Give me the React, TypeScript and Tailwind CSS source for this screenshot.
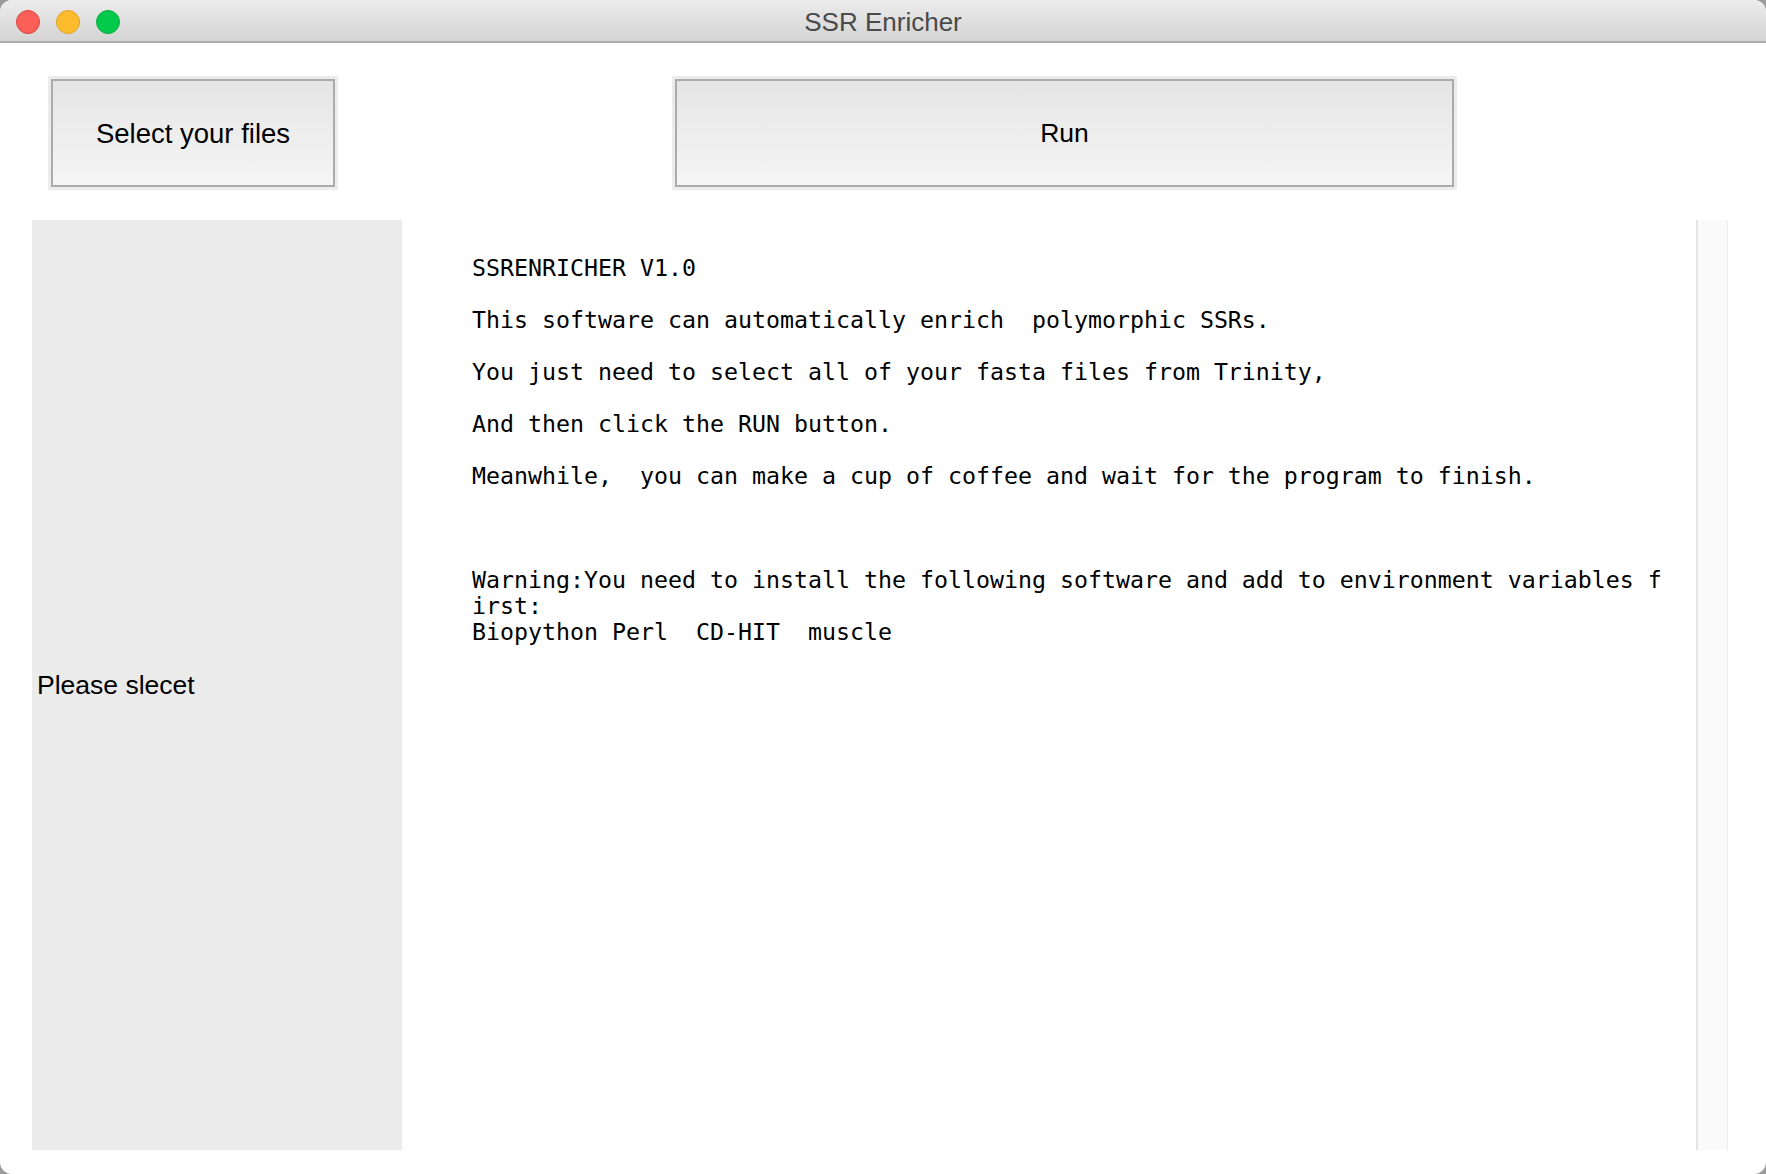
import React from 'react';

const mono = { fontFamily: '"DejaVu Sans Mono", "Liberation Mono", monospace' };
const sans = { fontFamily: '"Liberation Sans", Arial, sans-serif' };

const lines = [
  'SSRENRICHER V1.0',
  '',
  'This software can automatically enrich  polymorphic SSRs.',
  '',
  'You just need to select all of your fasta files from Trinity,',
  '',
  'And then click the RUN button.',
  '',
  'Meanwhile,  you can make a cup of coffee and wait for the program to finish.',
  '',
  '',
  '',
  'Warning:You need to install the following software and add to environment variables first:',
  'Biopython Perl  CD-HIT  muscle',
];

const MacButton = ({ label, className }: { label: string; className: string }) => (
  <div className={`p-[3px] bg-[#ececec] ${className}`}>
    <div className="w-full h-full border-2 border-[#ababab] bg-gradient-to-b from-[#e5e5e5] to-[#f5f5f5] flex items-center justify-center pt-[2px] text-black">
      {label}
    </div>
  </div>
);

export default function App() {
  return (
    <div className="w-[1766px] h-[1174px] bg-[#9a9a9a]" style={sans}>
      <div className="w-full h-full rounded-[12px] overflow-hidden bg-white flex flex-col">
        {/* Title bar */}
        <div className="relative h-[43px] shrink-0 bg-gradient-to-b from-[#ececec] to-[#d4d4d4] border-b-2 border-[#acacac] flex items-center pt-[3px] pl-[16px] gap-[16px]">
          <span className="w-[24px] h-[24px] rounded-full bg-[#fc5f57] border border-[#e0443e]" />
          <span className="w-[24px] h-[24px] rounded-full bg-[#fdbc2e] border border-[#dea123]" />
          <span className="w-[24px] h-[24px] rounded-full bg-[#00c94c] border border-[#10aa3c]" />
          <span className="absolute inset-0 flex items-center justify-center pt-[4px] text-[26px] text-[#4a4a4a]">
            SSR Enricher
          </span>
        </div>

        {/* Buttons */}
        <div className="flex pt-[33px] pl-[48px] gap-[334px]">
          <MacButton label="Select your files" className="w-[290px] h-[114px] text-[27.5px]" />
          <MacButton label="Run" className="w-[785px] h-[114px] text-[26.5px]" />
        </div>

        {/* Panels */}
        <div className="flex mt-[30px] h-[930px]">
          <div className="ml-[32px] w-[370px] bg-[#ebebeb] flex items-center pl-[5px] text-[26.5px] text-black pt-[2px]">
            Please slecet
          </div>
          <div className="flex-1 pl-[70px] pt-[35px]">
            <div
              className="w-[85ch] text-[23.25px] leading-[26px] text-black whitespace-pre-wrap break-all"
              style={mono}
            >
              {lines.map((l, i) => (
                <div key={i} className="min-h-[26px]">
                  {l}
                </div>
              ))}
            </div>
          </div>
          <div className="w-[32px] bg-[#fafafa] border-l-2 border-[#e4e4e4] border-r border-r-[#ebebeb]" />
          <div className="w-[38px]" />
        </div>
      </div>
    </div>
  );
}
